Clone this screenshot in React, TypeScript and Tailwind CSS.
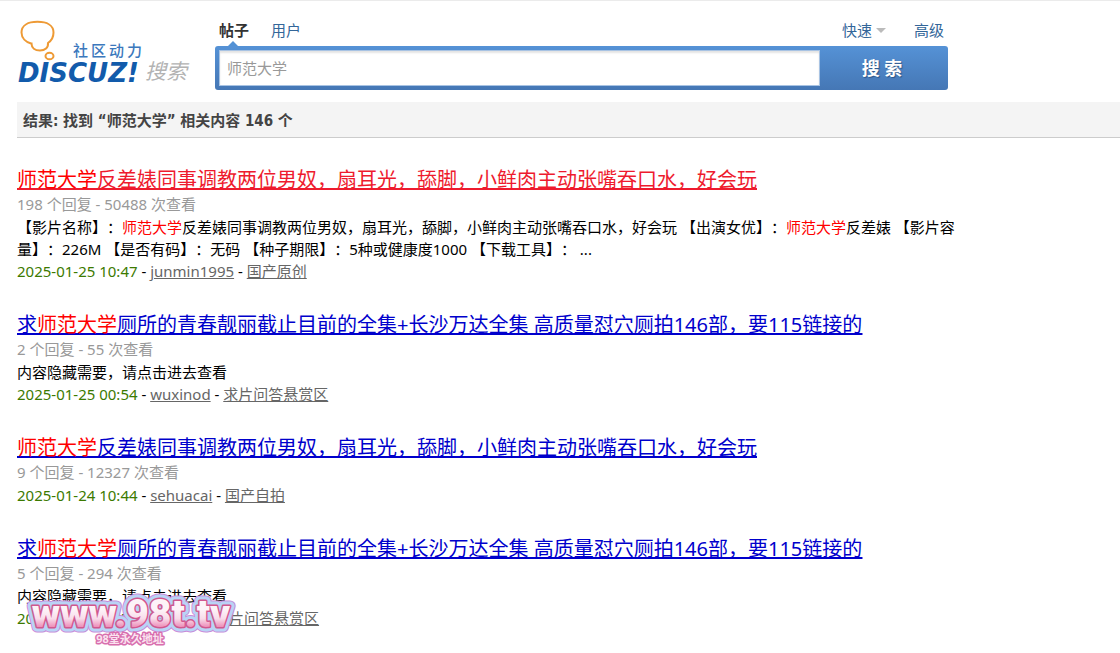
import type { ReactNode } from "react";

const KEYWORD = "师范大学";

type Result = {
    title: string;
    active?: boolean;
    stats: string;
    excerpt?: string;
    date: string;
    author: string;
    forum: string;
};

const results: Result[] = [
    {
        title: "师范大学反差婊同事调教两位男奴，扇耳光，舔脚，小鲜肉主动张嘴吞口水，好会玩",
        active: true,
        stats: "198 个回复 - 50488 次查看",
        excerpt:
            "【影片名称】：师范大学反差婊同事调教两位男奴，扇耳光，舔脚，小鲜肉主动张嘴吞口水，好会玩 【出演女优】：师范大学反差婊 【影片容量】：226M 【是否有码】：无码 【种子期限】：5种或健康度1000 【下载工具】： ...",
        date: "2025-01-25 10:47",
        author: "junmin1995",
        forum: "国产原创",
    },
    {
        title: "求师范大学厕所的青春靓丽截止目前的全集+长沙万达全集 高质量怼穴厕拍146部，要115链接的",
        stats: "2 个回复 - 55 次查看",
        excerpt: "内容隐藏需要，请点击进去查看",
        date: "2025-01-25 00:54",
        author: "wuxinod",
        forum: "求片问答悬赏区",
    },
    {
        title: "师范大学反差婊同事调教两位男奴，扇耳光，舔脚，小鲜肉主动张嘴吞口水，好会玩",
        stats: "9 个回复 - 12327 次查看",
        date: "2025-01-24 10:44",
        author: "sehuacai",
        forum: "国产自拍",
    },
    {
        title: "求师范大学厕所的青春靓丽截止目前的全集+长沙万达全集 高质量怼穴厕拍146部，要115链接的",
        stats: "5 个回复 - 294 次查看",
        excerpt: "内容隐藏需要，请点击进去查看",
        date: "2025-01-25 00:54",
        author: "wuxino",
        forum: "求片问答悬赏区",
    },
];

// Wraps every hit of the search keyword in red
function highlight(text: string): ReactNode[] {
    return text.split(KEYWORD).flatMap((part, i) =>
        i === 0 ? [part] : [<em key={i} className="not-italic text-[#ff0000]">{KEYWORD}</em>, part]
    );
}

function Logo() {
    return (
        <a href="#" aria-label="Discuz! 搜索" className="block shrink-0">
            <svg width="180" height="72" viewBox="0 0 180 72" className="overflow-visible">
                <g fill="none" stroke="#ee9a35" strokeWidth="2">
                    <path d="M14 26.500 C9 25 4.500 21 4.500 15.500 C4.500 8.500 11 4.800 20.500 4.800 C30 4.800 36.500 8.500 36.500 15.500 C36.500 20 34 24 31 26 C31.500 30.500 28 33.500 23 33.500 C18 33.500 14.500 31 14.500 26.500 Z" />
                    <ellipse cx="32.500" cy="39" rx="4" ry="3.300" />
                </g>
                <text x="56" y="39" fontSize="15" letterSpacing="3" fill="#3b78bd" className="font-medium">社区动力</text>
                <text x="1" y="65" fontSize="26" fill="#125bab" className="font-['DejaVu_Sans'] font-bold italic">DISCUZ!</text>
                <text x="128" y="62" fontSize="21" fill="#b3b3b3" className="italic">搜索</text>
            </svg>
        </a>
    );
}

function SearchForm() {
    return (
        <form className="w-[733px]" onSubmit={(e) => e.preventDefault()}>
            <div className="flex h-[45px] items-end justify-between px-1 pb-1 text-[#336699]">
                <div className="flex gap-[22px] leading-[23px]">
                    <a href="#" className="relative font-bold text-[#333]">
                        帖子
                        <span className="absolute -bottom-1 left-[9px] border-x-[5px] border-b-[5px] border-x-transparent border-b-[#5291d5]" />
                    </a>
                    <a href="#">用户</a>
                </div>
                <div className="flex gap-7 leading-[23px]">
                    <a href="#" className="flex items-center gap-1">
                        快速
                        <span className="border-x-[5px] border-t-[5px] border-x-transparent border-t-[#bbb]" />
                    </a>
                    <a href="#">高级</a>
                </div>
            </div>
            <div className="flex h-11 rounded-[3px] bg-linear-to-b from-[#5592d6] to-[#4577b5] p-1">
                <input
                    type="text"
                    aria-label="搜索"
                    defaultValue={KEYWORD}
                    className="min-w-0 flex-1 border border-[#a8c3e3] bg-white px-[7px] text-[#999] shadow-[inset_0_2px_2px_#e4e4e4] outline-none"
                />
                <button type="submit" className="w-[124px] text-lg leading-none font-bold text-white text-shadow-[1px_1px_1px_#2d5688]">
                    搜 索
                </button>
            </div>
        </form>
    );
}

function ResultItem({ item }: { item: Result }) {
    return (
        <li>
            <h3 className={`text-[20px] leading-[27px] underline ${item.active ? "text-[#ee1b2e]" : "text-[#0000cc]"}`}>
                <a href="#">{highlight(item.title)}</a>
            </h3>
            <p className="text-[#999]">{item.stats}</p>
            {item.excerpt && <p className="leading-[22px]">{highlight(item.excerpt)}</p>}
            <p>
                <span className="text-[#3c7a00]">{item.date}</span>
                {" - "}
                <a href="#" className="text-[#666] underline">{item.author}</a>
                {" - "}
                <a href="#" className="text-[#666] underline">{item.forum}</a>
            </p>
        </li>
    );
}

function Watermark() {
    return (
        <svg
            width="230"
            height="66"
            viewBox="0 0 230 66"
            className="pointer-events-none absolute top-[585px] left-4 overflow-visible"
            strokeLinejoin="round"
            textAnchor="middle"
        >
            <defs>
                <linearGradient id="pink" x1="0" y1="0" x2="0" y2="1">
                    <stop offset="0.4" stopColor="#fdf3f8" />
                    <stop offset="0.6" stopColor="#f8dcea" />
                    <stop offset="0.8" stopColor="#ec86b4" />
                </linearGradient>
            </defs>
            {/* outlines from the widest to the narrowest, then the fill */}
            <g stroke="#c98ad8" strokeWidth="11">
                <text id="mark" x="115" y="41" fontSize="39" className="font-['Roboto'] font-black">www.98t.tv</text>
            </g>
            <use href="#mark" stroke="#b9d3f5" strokeWidth="9" />
            <use href="#mark" stroke="#d0588f" strokeWidth="3" />
            <use href="#mark" fill="url(#pink)" />
            <text x="114" y="57" fontSize="11" fill="#fbe3f0" stroke="#d86fae" strokeWidth="3" className="font-bold [paint-order:stroke]">
                98堂永久地址
            </text>
        </svg>
    );
}

export default function App() {
    return (
        <div className="relative border-t border-[#ebebeb] bg-white pb-5 pl-[17px] font-['Noto_Sans','Noto_Sans_CJK_SC',sans-serif] text-[15px] leading-[23px] text-black [text-spacing-trim:space-all]">
            <header className="flex gap-[18px]">
                <div className="pt-4">
                    <Logo />
                </div>
                <SearchForm />
            </header>

            <main className="mt-3">
                <h2 className="border-b border-[#ccc] bg-[#f4f4f4] px-[6px] pt-2 pb-1 font-['DejaVu_Sans_Condensed','Noto_Sans_CJK_SC',sans-serif] font-bold text-[#444]">
                    结果: 找到 “师范大学” 相关内容 146 个
                </h2>
                <ul className="mt-7 flex max-w-[945px] flex-col gap-7">
                    {results.map((item, i) => (
                        <ResultItem key={i} item={item} />
                    ))}
                </ul>
            </main>

            <Watermark />
        </div>
    );
}
